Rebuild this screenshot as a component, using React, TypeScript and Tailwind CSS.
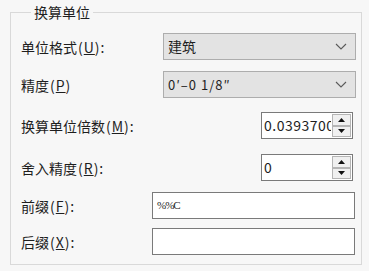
import React from 'react'

const FONT = 'font-["Noto_Sans_CJK_SC","Noto_Sans",sans-serif]'

const Label = ({ text, k }: { text: string; k: string }) => (
    <span className="text-[14px] leading-none text-[#1e1e1e]">
        {text}
        <span className="ml-px tracking-[1px]">
            (<u>{k}</u>):
        </span>
    </span>
)

const Combo = ({ value, mono }: { value: string; mono?: boolean }) => (
    <div className="flex h-[27px] w-[193px] items-center justify-between border border-[#adadad] bg-[#e3e3e3] pl-[4px] pr-[8px]">
        <span className={mono ? 'text-[13px] tracking-[1px] text-[#1e1e1e]' : 'text-[14px] text-[#1e1e1e]'}>{value}</span>
        <svg width="12" height="7" viewBox="0 0 12 7" fill="none" stroke="#5a5a5a" strokeWidth="1.1">
            <path d="M1 1l5 5 5-5" />
        </svg>
    </div>
)

const Arrow = ({ up }: { up?: boolean }) => (
    <div className="flex flex-1 items-center justify-center border border-[#b5b5b5] bg-[#f0f0f0]">
        <svg width="7" height="4" viewBox="0 0 7 4" fill="#111">
            {up ? <path d="M0 4h7L3.5 0z" /> : <path d="M0 0h7L3.5 4z" />}
        </svg>
    </div>
)

// the long value is clipped by the spin buttons, as in the dialog
const Spin = ({ value }: { value: string }) => (
    <div className="flex h-[27px] w-[92px] border border-[#7a7a7a] bg-white">
        <div className="flex w-[69px] items-center overflow-hidden whitespace-nowrap pl-[2px] text-[14px] tracking-[0.5px] text-[#1e1e1e]">
            {value}
        </div>
        <div className="flex w-[21px] flex-col p-px">
            <Arrow up />
            <Arrow />
        </div>
    </div>
)

const TextBox = ({ value }: { value?: string }) => (
    <div className="flex h-[27px] w-[203px] items-center border border-[#7a7a7a] bg-white pl-[4px] font-['Liberation_Serif',serif] text-[11px] tracking-[-1px] text-[#222]">
        {value}
    </div>
)

export default function App() {
    return (
        <div className={`h-[271px] w-[369px] bg-[#f7f7f7] pt-[2px] pl-[10px] ${FONT}`}>
            <fieldset className="h-[263px] w-[352px] border border-[#d9d9d9] pr-[5px] pl-[10px]">
                <legend className="ml-[10px] px-[3px] text-[14px] leading-[20px] text-[#1e1e1e]">换算单位</legend>
                <div className="flex flex-col pt-[11px]">
                    <div className="flex h-[27px] items-center justify-between">
                        <Label text="单位格式" k="U" />
                        <Combo value="建筑" />
                    </div>
                    <div className="mt-[11px] flex h-[27px] items-center justify-between">
                        <span className="text-[14px] leading-none text-[#1e1e1e]">
                            精度<span className="ml-px tracking-[1px]">(<u>P</u>)</span>
                        </span>
                        <Combo value={'0\u2032\u20130 1/8\u2033'} mono />
                    </div>
                    <div className="mt-[14px] flex h-[27px] items-center justify-between pr-[3px]">
                        <Label text="换算单位倍数" k="M" />
                        <Spin value="0.0393700" />
                    </div>
                    <div className="mt-[15px] flex h-[27px] items-center justify-between pr-[3px]">
                        <Label text="舍入精度" k="R" />
                        <Spin value="0" />
                    </div>
                    <div className="mt-[11px] flex h-[27px] items-center justify-between pr-[1px]">
                        <Label text="前缀" k="F" />
                        <TextBox value="%%C" />
                    </div>
                    <div className="mt-[9px] flex h-[27px] items-center justify-between pr-[1px]">
                        <Label text="后缀" k="X" />
                        <TextBox />
                    </div>
                </div>
            </fieldset>
        </div>
    )
}
